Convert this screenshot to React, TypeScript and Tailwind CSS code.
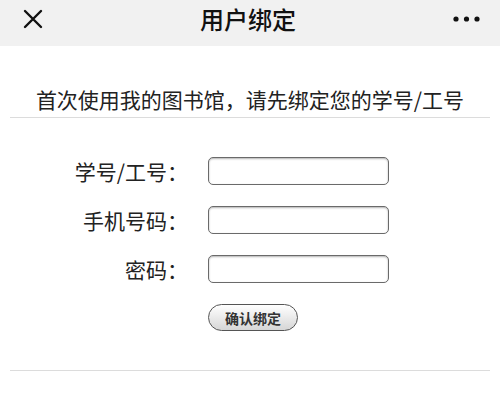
import React from 'react';

const cjk = { fontFamily: '"Noto Sans CJK SC", "Noto Sans", sans-serif' };

const Field = ({ label, type = 'text' }: { label: string; type?: string }) => (
  <div className="flex items-center">
    <label className="w-[178px] text-right text-[21px] leading-[28px] text-[#222]">{label}</label>
    <input
      type={type}
      className="ml-[20px] w-[181px] h-[28px] rounded-[5px] border border-[#6a6a6a] bg-white shadow-[inset_0_1px_2px_rgba(0,0,0,0.3)] outline-none"
    />
  </div>
);

export default function App() {
  return (
    <div className="w-[500px] h-[415px] bg-white overflow-hidden" style={cjk}>
      {/* top bar */}
      <div className="h-[46px] bg-[#f1f1f1] flex items-center pb-[8px] pl-[23px] pr-[20px]">
        <svg width="20" height="20" viewBox="0 0 20 20" className="shrink-0">
          <path d="M2 2 L18 18 M18 2 L2 18" stroke="#111" strokeWidth="2.4" strokeLinecap="round" />
        </svg>
        <div className="flex-1 text-center text-[24px] leading-[30px] font-medium text-[#111]">用户绑定</div>
        <svg width="27" height="6" viewBox="0 0 27 6" className="shrink-0">
          <circle cx="3" cy="3" r="2.6" fill="#111" />
          <circle cx="13.5" cy="3" r="2.6" fill="#111" />
          <circle cx="24" cy="3" r="2.6" fill="#111" />
        </svg>
      </div>

      {/* intro */}
      <div className="mx-[10px] pt-[39px] pb-[4px] border-b border-[#dcdcdc] text-center text-[21px] leading-[28px] text-[#222]">
        首次使用我的图书馆，请先绑定您的学号/工号
      </div>

      {/* form */}
      <div className="mx-[10px] pt-[39px] pb-[39px] border-b border-[#dcdcdc] flex flex-col gap-[21px]">
        <Field label="学号/工号：" />
        <Field label="手机号码：" />
        <Field label="密码：" type="password" />
        <div className="pl-[198px]">
          <button className="w-[90px] h-[27px] rounded-full border border-[#555] bg-gradient-to-b from-white to-[#d6d6d6] text-[14px] leading-none font-bold text-[#333]">
            确认绑定
          </button>
        </div>
      </div>
    </div>
  );
}
